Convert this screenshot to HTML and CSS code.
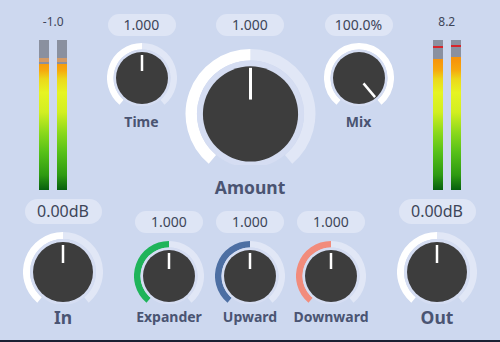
FILE: index.html
```html
<!DOCTYPE html>
<html lang="en">
<head>
    <meta charset="UTF-8">
    <title>Dynamics</title>
    <link rel="stylesheet" href="styles.css">
</head>
<body>
    <div id="plugin">
        <div class="row top-row">
            <div class="side">
                <div class="meter-label">-1.0</div>
                <div class="meters">
                    <div class="meter"><div class="meter-off" style="height: 24px"></div><div class="peak peak-orange" style="top: 18px"></div></div>
                    <div class="meter"><div class="meter-off" style="height: 24px"></div><div class="peak peak-orange" style="top: 18px"></div></div>
                </div>
            </div>

            <div class="middle top-knobs">
                <div class="knob small">
                    <div class="value">1.000</div>
                    <svg width="70" height="63" viewBox="0 0 70 63">
                        <path class="track" d="M35 3.25 A31.75 31.75 0 0 1 55.41 59.32"/>
                        <path class="fill" d="M14.59 59.32 A31.75 31.75 0 0 1 35 3.25"/>
                        <circle class="ring" cx="35" cy="35" r="28.5"/>
                        <circle class="dial" cx="35" cy="35" r="26"/>
                        <line class="pointer" x1="35" y1="12" x2="35" y2="28"/>
                    </svg>
                    <div class="label">Time</div>
                </div>
                <div class="knob big">
                    <div class="value">1.000</div>
                    <svg width="131" height="117" viewBox="0 0 131 117">
                        <path class="track" d="M65.5 5.75 A59.75 59.75 0 0 1 103.91 111.27"/>
                        <path class="fill" d="M27.09 111.27 A59.75 59.75 0 0 1 65.5 5.75"/>
                        <circle class="ring" cx="65.5" cy="65.5" r="54"/>
                        <circle class="dial" cx="65.5" cy="65.5" r="48"/>
                        <line class="pointer thick" x1="65.5" y1="19" x2="65.5" y2="51"/>
                    </svg>
                    <div class="label">Amount</div>
                </div>
                <div class="knob small">
                    <div class="value">100.0%</div>
                    <svg width="70" height="63" viewBox="0 0 70 63">
                        <path class="fill" d="M14.59 59.32 A31.75 31.75 0 1 1 55.41 59.32"/>
                        <circle class="ring" cx="35" cy="35" r="28.5"/>
                        <circle class="dial" cx="35" cy="35" r="26"/>
                        <line class="pointer" x1="39.5" y1="40.36" x2="51.07" y2="54.15"/>
                    </svg>
                    <div class="label">Mix</div>
                </div>
            </div>

            <div class="side">
                <div class="meter-label">8.2</div>
                <div class="meters">
                    <div class="meter"><div class="meter-off" style="height: 19px"></div><div class="peak peak-red" style="top: 6px"></div></div>
                    <div class="meter"><div class="meter-off" style="height: 17px"></div><div class="peak peak-red" style="top: 5px"></div></div>
                </div>
            </div>
        </div>

        <div class="row bottom-row">
            <div class="side">
                <div class="knob gain">
                    <div class="value">0.00dB</div>
                    <svg width="80" height="72" viewBox="0 0 80 72">
                        <path class="track" d="M40 3.5 A36.5 36.5 0 0 1 63.46 67.96"/>
                        <path class="fill" d="M16.54 67.96 A36.5 36.5 0 0 1 40 3.5"/>
                        <circle class="ring" cx="40" cy="40" r="33"/>
                        <circle class="dial" cx="40" cy="40" r="30"/>
                        <line class="pointer" x1="40" y1="13" x2="40" y2="31"/>
                    </svg>
                    <div class="label">In</div>
                </div>
            </div>

            <div class="middle bottom-knobs">
                <div class="knob small">
                    <div class="value">1.000</div>
                    <svg width="70" height="63" viewBox="0 0 70 63">
                        <path class="track" d="M35 3.25 A31.75 31.75 0 0 1 55.41 59.32"/>
                        <path class="fill green" d="M14.59 59.32 A31.75 31.75 0 0 1 35 3.25"/>
                        <circle class="ring" cx="35" cy="35" r="28.5"/>
                        <circle class="dial" cx="35" cy="35" r="26"/>
                        <line class="pointer" x1="35" y1="12" x2="35" y2="28"/>
                    </svg>
                    <div class="label">Expander</div>
                </div>
                <div class="knob small">
                    <div class="value">1.000</div>
                    <svg width="70" height="63" viewBox="0 0 70 63">
                        <path class="track" d="M35 3.25 A31.75 31.75 0 0 1 55.41 59.32"/>
                        <path class="fill blue" d="M14.59 59.32 A31.75 31.75 0 0 1 35 3.25"/>
                        <circle class="ring" cx="35" cy="35" r="28.5"/>
                        <circle class="dial" cx="35" cy="35" r="26"/>
                        <line class="pointer" x1="35" y1="12" x2="35" y2="28"/>
                    </svg>
                    <div class="label">Upward</div>
                </div>
                <div class="knob small">
                    <div class="value">1.000</div>
                    <svg width="70" height="63" viewBox="0 0 70 63">
                        <path class="track" d="M35 3.25 A31.75 31.75 0 0 1 55.41 59.32"/>
                        <path class="fill salmon" d="M14.59 59.32 A31.75 31.75 0 0 1 35 3.25"/>
                        <circle class="ring" cx="35" cy="35" r="28.5"/>
                        <circle class="dial" cx="35" cy="35" r="26"/>
                        <line class="pointer" x1="35" y1="12" x2="35" y2="28"/>
                    </svg>
                    <div class="label">Downward</div>
                </div>
            </div>

            <div class="side">
                <div class="knob gain">
                    <div class="value">0.00dB</div>
                    <svg width="80" height="72" viewBox="0 0 80 72">
                        <path class="track" d="M40 3.5 A36.5 36.5 0 0 1 63.46 67.96"/>
                        <path class="fill" d="M16.54 67.96 A36.5 36.5 0 0 1 40 3.5"/>
                        <circle class="ring" cx="40" cy="40" r="33"/>
                        <circle class="dial" cx="40" cy="40" r="30"/>
                        <line class="pointer" x1="40" y1="13" x2="40" y2="31"/>
                    </svg>
                    <div class="label">Out</div>
                </div>
            </div>
        </div>
    </div>
</body>
</html>
```

FILE: styles.css
```css
:root {
    --bg: #cdd8ef;
    --box-bg: #dee5f5;
    --track: #e1e7f6;
    --ring: #d5ddf2;
    --dial: #3d3d3d;
    --value-color: #3d4559;
    --label-color: #4a5472;
}

body {
    margin: 0;
    background: #1b2033;
    font-family: "Noto Sans", sans-serif;
}

#plugin {
    width: 500px;
    height: 340px;
    background: var(--bg);
    border-bottom: 2px solid #1b2033;
    display: flex;
    flex-direction: column;
}

.row { display: flex; }
.top-row { height: 198px; }
.bottom-row { height: 142px; }

.side {
    width: 126px;
    display: flex;
    flex-direction: column;
    align-items: center;
}

.middle {
    flex: 1;
    display: flex;
    justify-content: center;
}

/* meters */
.meter-label {
    margin-top: 14px;
    height: 16px;
    line-height: 16px;
    font-size: 12px;
    color: var(--value-color);
}
.meters {
    margin-top: 10px;
    display: flex;
    gap: 8px;
}
.meter {
    position: relative;
    width: 10px;
    height: 150px;
    background: linear-gradient(to top,
        #075f0e 0%,
        #2e9a12 10%,
        #56c018 25%,
        #8ad81c 38%,
        #d2ef21 52%,
        #e6f422 65%,
        #ecd81a 74%,
        #f6a80e 80%,
        #f7960b 86%,
        #f48d0a 100%);
}
.meter-off { background: #8a909f; }
.peak {
    position: absolute;
    left: 0;
    width: 100%;
}
.peak-orange { height: 4px; background: #d39a66; }
.peak-red { height: 2px; background: #d8252b; }

/* knobs */
.knob {
    display: flex;
    flex-direction: column;
    align-items: center;
}
.knob svg { display: block; }

.value {
    background: var(--box-bg);
    color: var(--value-color);
    border-radius: 11px;
    height: 22px;
    line-height: 22px;
    min-width: 68px;
    padding: 0 1px;
    box-sizing: border-box;
    text-align: center;
    font-size: 14px;
}

.label {
    color: var(--label-color);
    font-weight: bold;
    text-align: center;
}

.top-knobs { gap: 7.5px; }
.top-knobs .knob { margin-top: 14px; }
.top-knobs .small { width: 70px; }
.top-knobs .small svg { margin-top: 7px; }
.top-knobs .small .label {
    margin-top: 7px;
    font-size: 14px;
    line-height: 18px;
}
.top-knobs .big { width: 132px; }
.top-knobs .big svg { margin-top: 13px; }
.top-knobs .big .label {
    margin-top: 11px;
    font-size: 17.5px;
    line-height: 22px;
}

.bottom-knobs .knob {
    width: 81px;
    margin-top: 13px;
}
.bottom-knobs svg { margin-top: 7.5px; }
.bottom-knobs .label {
    margin-top: 4.5px;
    font-size: 14px;
    line-height: 18px;
}

.gain { margin-top: 1px; }
.gain .value {
    width: 77px;
    height: 25px;
    line-height: 25px;
    border-radius: 12.5px;
    font-size: 16px;
}
.gain svg { margin-top: 8px; }
.gain .label {
    margin-top: 2px;
    font-size: 17.5px;
    line-height: 22px;
}

.track, .fill { fill: none; }
.small .track, .small .fill { stroke-width: 6.5; }
.big .track, .big .fill { stroke-width: 11.5; }
.gain .track, .gain .fill { stroke-width: 7; }
.track { stroke: var(--track); }
.fill { stroke: #ffffff; }
.fill.green { stroke: #1fb45a; }
.fill.blue { stroke: #4d6fa3; }
.fill.salmon { stroke: #f28c7c; }

.ring { fill: var(--ring); }
.dial { fill: var(--dial); }
.pointer {
    stroke: #ffffff;
    stroke-width: 2.5;
}
.pointer.thick { stroke-width: 3; }
```
